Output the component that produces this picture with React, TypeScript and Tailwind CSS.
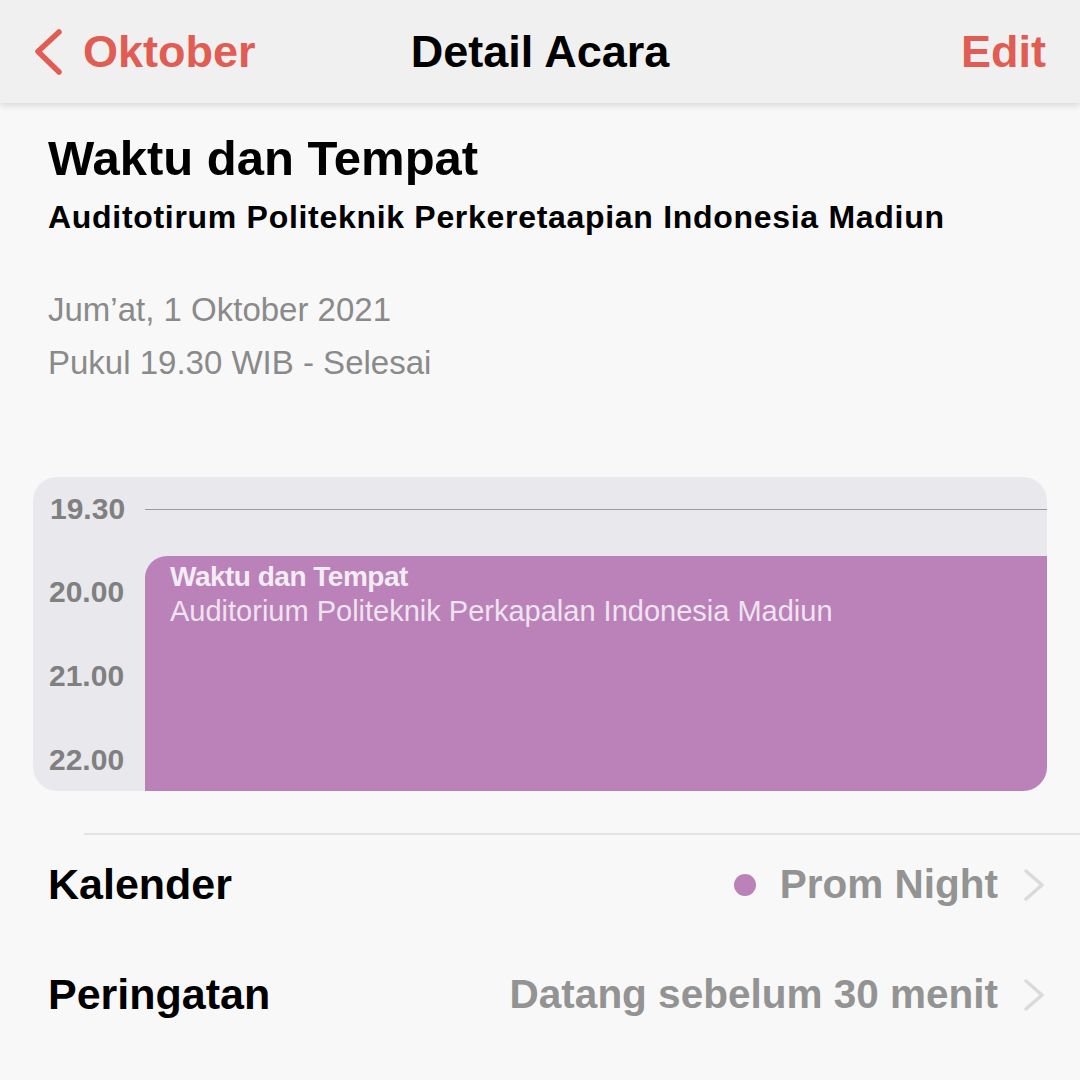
const ChevronLeft = () => (
  <svg width="30" height="48" viewBox="0 0 30 48" fill="none">
    <path d="M26 4 L5 23.5 L26 44" stroke="#e15d54" strokeWidth="5.5" strokeLinecap="round" strokeLinejoin="round" />
  </svg>
);

const ChevronRight = () => (
  <svg width="22" height="34" viewBox="0 0 22 34" fill="none">
    <path d="M3 3 L19 17 L3 31" stroke="#dadada" strokeWidth="3.5" strokeLinecap="round" strokeLinejoin="round" />
  </svg>
);

const Row = ({ label, children }: { label: string; children: React.ReactNode }) => (
  <div className="flex items-center justify-between pl-12 pr-[35px]">
    <span className="text-[43px] leading-[43px] font-bold text-black">{label}</span>
    <div className="flex items-center">
      {children}
      <span className="ml-[25px] flex items-center">
        <ChevronRight />
      </span>
    </div>
  </div>
);

export default function App() {
  return (
    <div className="w-[1080px] h-[1080px] overflow-hidden bg-[#f8f8f8] font-['Liberation_Sans',Arial,sans-serif]">
      <header className="relative z-10 h-[103px] bg-[#eff0ef] grid grid-cols-[1fr_auto_1fr] items-center shadow-[0_3px_6px_rgba(0,0,0,0.12)]">
        <div className="flex items-center pl-[33px]">
          <ChevronLeft />
          <span className="ml-[20px] text-[45px] leading-[45px] font-bold text-[#e15d54]">Oktober</span>
        </div>
        <h1 className="text-[45px] leading-[45px] font-bold text-black">Detail Acara</h1>
        <div className="flex justify-end pr-[34px]">
          <span className="text-[45px] leading-[45px] font-bold text-[#e15d54]">Edit</span>
        </div>
      </header>

      <section className="px-12 pt-[31px]">
        <h2 className="text-[49px] leading-[49px] font-bold text-black">Waktu dan Tempat</h2>
        <p className="mt-[18px] text-[32px] leading-[32px] font-bold tracking-[0.7px] text-black">
          Auditotirum Politeknik Perkeretaapian Indonesia Madiun
        </p>
        <div className="mt-[60px] flex flex-col gap-[20px] text-[33px] leading-[33px] text-[#8a8a8a]">
          <p>Jum’at, 1 Oktober 2021</p>
          <p>Pukul 19.30 WIB - Selesai</p>
        </div>
      </section>

      <div className="mx-[33px] mt-[98px] h-[314px] rounded-[24px] overflow-hidden bg-[#e9e8ed] flex flex-col">
        <div className="mt-[17px] h-[30px] flex items-center">
          <span className="w-[112px] pl-[17px] text-[30px] leading-[30px] font-bold text-[#808080]">19.30</span>
          <div className="flex-1 h-px bg-[#9a9a9a]" />
        </div>
        <div className="mt-[32px] flex flex-1">
          <div className="w-[112px] pl-[16px] pt-[21px] flex flex-col gap-[54px] text-[30px] leading-[30px] font-bold text-[#808080]">
            <span>20.00</span>
            <span>21.00</span>
            <span>22.00</span>
          </div>
          <div className="flex-1 bg-[#ba82b9] rounded-tl-[22px] pl-[25px] pt-[7px]">
            <p className="text-[28px] leading-[28px] font-bold tracking-[-0.5px] text-[#f4ecf4]">Waktu dan Tempat</p>
            <p className="mt-[6px] text-[29px] leading-[29px] text-[#efe3ef]">
              Auditorium Politeknik Perkapalan Indonesia Madiun
            </p>
          </div>
        </div>
      </div>

      <div className="ml-[84px] mt-[42px] h-[2px] bg-[#e2e2e2]" />

      <div className="pt-[28px] flex flex-col gap-[67px]">
        <Row label="Kalender">
          <span className="w-[22px] h-[22px] rounded-full bg-[#bb82ba] mr-[24px]" />
          <span className="text-[40.5px] leading-[43px] font-bold text-[#939393]">Prom Night</span>
        </Row>
        <Row label="Peringatan">
          <span className="text-[40.5px] leading-[43px] font-bold text-[#939393]">Datang sebelum 30 menit</span>
        </Row>
      </div>
    </div>
  );
}
